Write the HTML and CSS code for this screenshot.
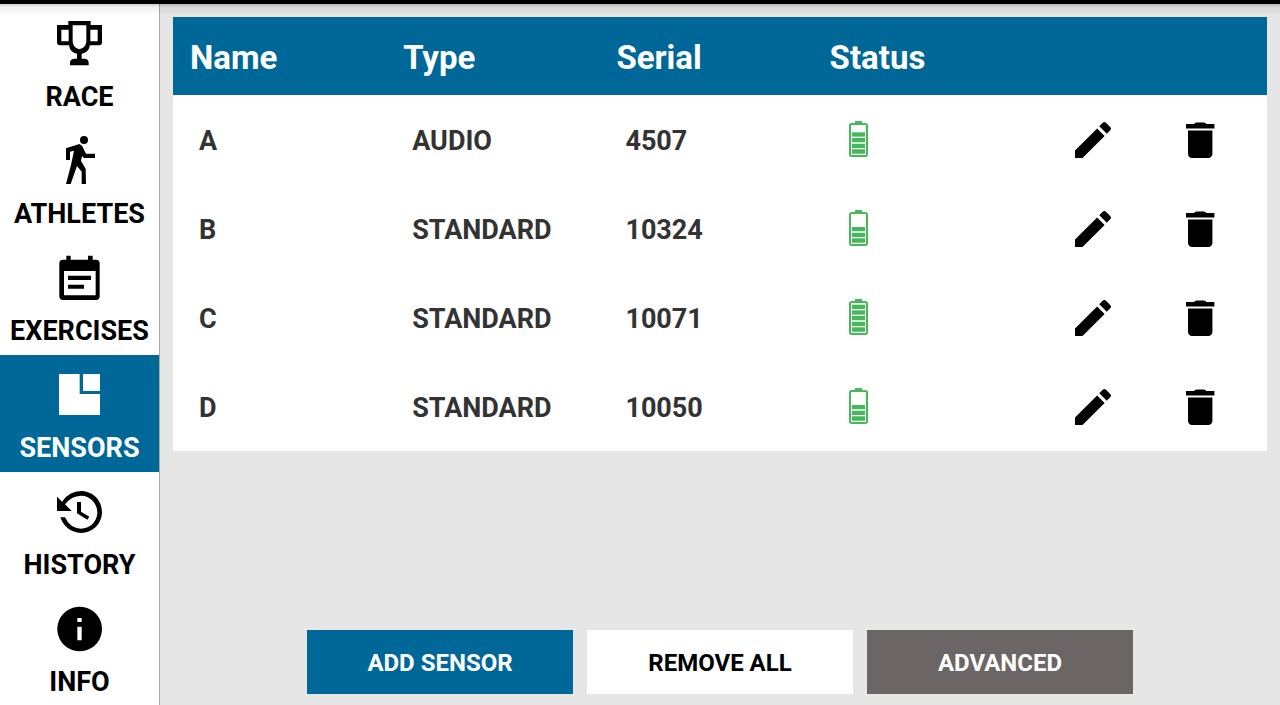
FILE: index.html
```html
<!DOCTYPE html>
<html lang="en">
<head>
<meta charset="utf-8">
<meta name="viewport" content="width=device-width, initial-scale=1">
<title>Sensors</title>
<link rel="stylesheet" href="styles.css">
</head>
<body>
<svg class="defs" aria-hidden="true">
  <symbol id="edit" viewBox="0 0 24 24"><path d="M3 17.25V21h3.75L17.81 9.94l-3.75-3.75L3 17.25zM20.71 7.04a1 1 0 0 0 0-1.41l-2.34-2.34a1 1 0 0 0-1.41 0l-1.83 1.83 3.75 3.75 1.83-1.83z"/></symbol>
  <symbol id="trash" viewBox="0 0 24 24"><path d="M6 19c0 1.100.9 2 2 2h8.200c1.100 0 2-.9 2-2V7.200H6V19zM19.200 4h-4Q14.700 3.200 14 3.200h-3.800Q9.500 3.200 9 4H5v2.200h14.200V4z"/></symbol>
  <symbol id="battery" viewBox="0 0 57 108">
    <path d="M18 0h21v7H18z"/>
    <path fill-rule="evenodd" d="M8 6h41q8 0 8 8v86q0 8-8 8H8q-8 0-8-8V14q0-8 8-8zM6 12v90h45V12z"/>
    <path d="M9 85h39v13H9zM9 68h39v13H9zM9 51h39v13H9z"/>
  </symbol>
  <symbol id="bar4" viewBox="0 0 57 108"><path d="M9 34h39v13H9z"/></symbol>
  <symbol id="bar5" viewBox="0 0 57 108"><path d="M9 17h39v13H9z"/></symbol>
</svg>
<div class="statusbar"></div>
<div class="app">
  <nav class="sidebar">
    <a class="tab" href="#race">
      <svg class="tab-icon" viewBox="156 51 165 165" aria-hidden="true"><path fill-rule="evenodd" d="M205 63h67v12h34v52q0 9-9 9h-27q-4 22-25 25v15h9q12 1 12 12v8h-56v-8q0-11 12-12h9v-15q-21-3-24-25h-27q-9 0-9-9V75h34zM218 76v50q3 18 20 22 18-4 21-22V76zM184 89v35h22V89zM271 89v35h22V89z"/></svg>
      <span>RACE</span>
    </a>
    <a class="tab" href="#athletes">
      <svg class="tab-icon" viewBox="156 42 165 165" aria-hidden="true"><circle cx="252" cy="60" r="12"/><path d="M198 85l40-13 8 5 12 24h27v13h-33l-6-6-3 15 14 23 1 46h-13v-37l-14-17-19 54h-14l15-57 9-43-12 3v25h-12z"/></svg>
      <span>ATHLETES</span>
    </a>
    <a class="tab" href="#exercises">
      <svg class="tab-icon" viewBox="156 33 165 165" aria-hidden="true"><path fill-rule="evenodd" d="M199 47h13v12h52V47h14v12h10q11 0 11 11v99q0 11-11 11h-99q-11 0-11-11V70q0-11 11-11h10zM192 93v73h95V93z"/><path d="M204 107h69v13h-69zM204 134h48v12h-48z"/></svg>
      <span>EXERCISES</span>
    </a>
    <a class="tab tab-active" href="#sensors" aria-current="page">
      <svg class="tab-icon" viewBox="156 54 165 165" aria-hidden="true"><path d="M177 72h62v60h61v63H177zM249 72h51v51h-51z"/></svg>
      <span>SENSORS</span>
    </a>
    <a class="tab" href="#history">
      <svg class="tab-icon" viewBox="156 30 165 165" aria-hidden="true"><path d="M171 65l15 15q22-32 57-32c35 0 63 28 63 63s-28 63-63 63q-46-3-62-47h14q15 33 48 34c27 0 49-22 49-49s-22-50-49-50q-29 1-48 26l20 20h-44z"/><path d="M231 81h12v29l25 15-6 9-31-19z"/></svg>
      <span>HISTORY</span>
    </a>
    <a class="tab" href="#info">
      <svg class="tab-icon" viewBox="156 36 165 165" aria-hidden="true"><path fill-rule="evenodd" d="M239 50a67 67 0 1 1-.1 0zM232 84v12h13V84zM232 110v41h13v-41z"/></svg>
      <span>INFO</span>
    </a>
  </nav>
  <main class="content">
    <table class="sensors">
      <thead>
        <tr><th scope="col">Name</th><th scope="col">Type</th><th scope="col">Serial</th><th scope="col">Status</th></tr>
      </thead>
      <tbody>
        <tr>
          <td>A</td><td>AUDIO</td><td>4507</td>
          <td class="status"><svg class="battery" viewBox="0 0 57 108" role="img" aria-label="Battery 80%"><use href="#battery"/><use href="#bar4"/></svg></td>
          <td class="action"><button class="icon-button" aria-label="Edit A"><svg><use href="#edit"/></svg></button></td>
          <td class="action"><button class="icon-button" aria-label="Delete A"><svg><use href="#trash"/></svg></button></td>
        </tr>
        <tr>
          <td>B</td><td>STANDARD</td><td>10324</td>
          <td class="status"><svg class="battery" viewBox="0 0 57 108" role="img" aria-label="Battery 60%"><use href="#battery"/></svg></td>
          <td class="action"><button class="icon-button" aria-label="Edit B"><svg><use href="#edit"/></svg></button></td>
          <td class="action"><button class="icon-button" aria-label="Delete B"><svg><use href="#trash"/></svg></button></td>
        </tr>
        <tr>
          <td>C</td><td>STANDARD</td><td>10071</td>
          <td class="status"><svg class="battery" viewBox="0 0 57 108" role="img" aria-label="Battery 100%"><use href="#battery"/><use href="#bar4"/><use href="#bar5"/></svg></td>
          <td class="action"><button class="icon-button" aria-label="Edit C"><svg><use href="#edit"/></svg></button></td>
          <td class="action"><button class="icon-button" aria-label="Delete C"><svg><use href="#trash"/></svg></button></td>
        </tr>
        <tr>
          <td>D</td><td>STANDARD</td><td>10050</td>
          <td class="status"><svg class="battery" viewBox="0 0 57 108" role="img" aria-label="Battery 60%"><use href="#battery"/></svg></td>
          <td class="action"><button class="icon-button" aria-label="Edit D"><svg><use href="#edit"/></svg></button></td>
          <td class="action"><button class="icon-button" aria-label="Delete D"><svg><use href="#trash"/></svg></button></td>
        </tr>
      </tbody>
    </table>
    <div class="actions">
      <button class="button button-primary">ADD SENSOR</button>
      <button class="button button-plain">REMOVE ALL</button>
      <button class="button button-dark">ADVANCED</button>
    </div>
  </main>
</div>
</body>
</html>
```
FILE: styles.css
```css
* {
  box-sizing: border-box;
}

body {
  margin: 0;
  height: 100vh;
  display: flex;
  flex-direction: column;
  background: #e6e6e6;
  color: #000;
  font-family: Roboto, "Liberation Sans", sans-serif;
  font-weight: 700;
}

.defs {
  position: absolute;
  width: 0;
  height: 0;
}

.statusbar {
  flex: none;
  height: 4px;
  background: #000;
}

.app {
  position: relative;
  flex: 1;
  min-height: 0;
  display: flex;
}

/* Soft shadow cast by the status bar */
.app::before {
  content: "";
  position: absolute;
  inset: 0 0 auto;
  height: 12px;
  background: linear-gradient(rgba(0, 0, 0, 0.2), rgba(0, 0, 0, 0.06) 25%, transparent);
  pointer-events: none;
}

.sidebar {
  flex: none;
  width: 160px;
  display: flex;
  flex-direction: column;
  overflow-y: auto;
  scrollbar-width: none;
  background: #fff;
  border-right: 1px solid #aaa;
}

.tab {
  flex: none;
  height: 117px;
  padding-top: 13px;
  display: flex;
  flex-direction: column;
  align-items: center;
  gap: 9px;
  color: #000;
  font-size: 27px;
  line-height: 32px;
  text-decoration: none;
}

.tab-active {
  background: #006899;
  color: #fff;
}

.tab-icon {
  width: 55px;
  height: 55px;
  fill: currentColor;
}

.content {
  flex: 1;
  min-width: 0;
  padding: 13px 13px 11px;
  display: flex;
  flex-direction: column;
  justify-content: space-between;
  overflow-y: auto;
}

.sensors {
  display: block;
  background: #fff;
}

.sensors thead,
.sensors tbody {
  display: block;
}

.sensors tr {
  display: grid;
  grid-template-columns: repeat(4, 2fr) 1fr 1fr;
  align-items: center;
  padding: 0 14px;
}

.sensors thead tr {
  height: 78px;
  background: #006899;
}

.sensors tbody tr {
  height: 89px;
}

.sensors th {
  padding: 3px 0 0 3px;
  color: #fff;
  font-size: 33px;
  line-height: 40px;
  text-align: left;
}

.sensors td {
  padding: 2px 0 0 12px;
  color: #333;
  font-size: 27px;
  line-height: 32px;
}

.sensors .status {
  padding: 0 0 2px 22px;
}

.sensors .action {
  padding: 0;
  display: flex;
  justify-content: center;
}

.battery {
  display: block;
  width: 19px;
  height: 36px;
  fill: #46b85c;
}

.icon-button {
  padding: 0;
  border: 0;
  background: none;
  cursor: pointer;
}

.icon-button svg {
  display: block;
  width: 48px;
  height: 48px;
  fill: #000;
}

.actions {
  display: grid;
  grid-template-columns: repeat(3, 266px);
  justify-content: center;
  gap: 14px;
}

.button {
  height: 64px;
  padding: 2px 0 0;
  border: 0;
  font: inherit;
  font-size: 24px;
  line-height: 32px;
  cursor: pointer;
}

.button-primary {
  background: #006899;
  color: #fff;
}

.button-plain {
  background: #fff;
  color: #000;
}

.button-dark {
  background: #6c6565;
  color: #fff;
}
```
